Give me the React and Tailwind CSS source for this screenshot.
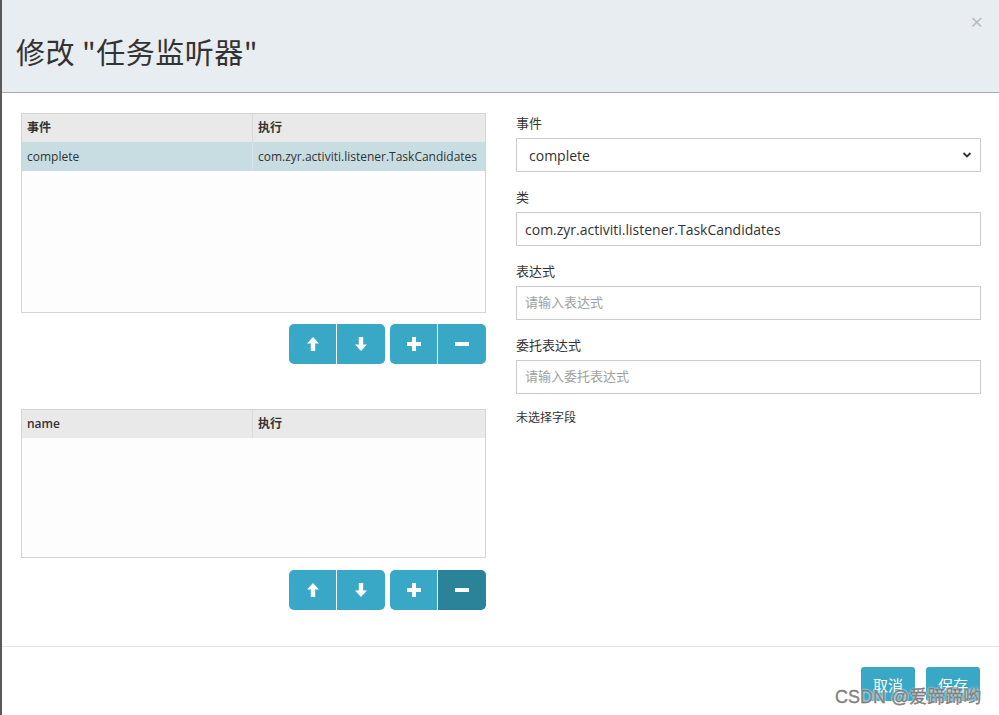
import React from 'react';

const font = { fontFamily: '"Open Sans", "Noto Sans CJK SC", sans-serif' };

function ArrowUp() {
  return (
    <svg width="12" height="14" viewBox="0 0 12 14" fill="white">
      <path d="M6 0 L12 6.5 L8.2 6.5 L8.2 14 L3.8 14 L3.8 6.5 L0 6.5 Z" />
    </svg>
  );
}
function ArrowDown() {
  return (
    <svg width="12" height="14" viewBox="0 0 12 14" fill="white">
      <path d="M6 14 L12 7.5 L8.2 7.5 L8.2 0 L3.8 0 L3.8 7.5 L0 7.5 Z" />
    </svg>
  );
}
function Plus() {
  return (
    <svg width="14" height="14" viewBox="0 0 14 14" fill="white">
      <path d="M5 0 H9 V5 H14 V9 H9 V14 H5 V9 H0 V5 H5 Z" />
    </svg>
  );
}
function Minus() {
  return (
    <svg width="14" height="14" viewBox="0 0 14 14" fill="white">
      <rect x="0" y="5" width="14" height="4" />
    </svg>
  );
}

function ButtonBar({ activeMinus }) {
  return (
    <div className="flex justify-end gap-[5px]">
      <div className="flex h-[40px] rounded-[5px] overflow-hidden">
        <button className="w-[48px] bg-[#38a8c6] flex items-center justify-center border-r border-white"><ArrowUp /></button>
        <button className="w-[48px] bg-[#38a8c6] flex items-center justify-center"><ArrowDown /></button>
      </div>
      <div className="flex h-[40px] rounded-[5px] overflow-hidden">
        <button className="w-[48px] bg-[#38a8c6] flex items-center justify-center border-r border-white"><Plus /></button>
        <button className={`w-[48px] flex items-center justify-center ${activeMinus ? 'bg-[#2a8399]' : 'bg-[#38a8c6]'}`}><Minus /></button>
      </div>
    </div>
  );
}

function Grid({ height, cols, rows }) {
  return (
    <div className={`border border-[#d4d4d4] bg-[#fdfdfd] ${height}`}>
      <div className="flex h-[28px] bg-[#e9e9e9] text-[12px] text-[#333] font-semibold">
        <div className="w-[231px] px-[5px] flex items-center border-r border-[#d8d8d8]">{cols[0]}</div>
        <div className="flex-1 px-[5px] flex items-center">{cols[1]}</div>
      </div>
      {rows.map((r, i) => (
        <div key={i} className="flex h-[29px] bg-[#c8dde2] text-[12px] text-[#333]">
          <div className="w-[231px] px-[5px] flex items-center border-r border-[#d8e4e7]">{r[0]}</div>
          <div className="flex-1 px-[5px] flex items-center whitespace-nowrap">{r[1]}</div>
        </div>
      ))}
    </div>
  );
}

function Field({ label, children }) {
  return (
    <div className="mb-[15px]">
      <div className="h-[20px] leading-[20px] text-[13px] text-[#333] mb-[5px]">{label}</div>
      {children}
    </div>
  );
}

export default function App() {
  return (
    <div className="relative w-[999px] h-[715px] bg-white border-l-2 border-[#5a5a5a] overflow-hidden flex flex-col" style={font}>
      <header className="h-[93px] bg-[#e8edf1] border-b border-[#a3abb8] flex items-center justify-between pl-[14px] pr-[16px] shrink-0">
        <h1 className="text-[29px] text-[#333] mt-[12px] tracking-[0.5px]" style={{ fontFamily: '"Noto Sans CJK SC", "Open Sans", sans-serif' }}>修改 "任务监听器"</h1>
        <div className="self-start mt-[10px] text-[#bbbbbb] text-[22px] leading-none">×</div>
      </header>

      <main className="flex gap-[30px] pl-[19px] pt-[20px] flex-1">
        <div className="w-[465px]">
          <Grid height="h-[200px]" cols={['事件', '执行']} rows={[['complete', 'com.zyr.activiti.listener.TaskCandidates']]} />
          <div className="mt-[11px]"><ButtonBar /></div>
          <div className="mt-[45px]">
            <Grid height="h-[149px]" cols={['name', '执行']} rows={[]} />
          </div>
          <div className="mt-[12px]"><ButtonBar activeMinus /></div>
        </div>

        <div className="w-[465px]">
          <Field label="事件">
            <div className="h-[34px] border border-[#cccccc] flex items-center justify-between pl-[12px] pr-[8px] text-[14px] text-[#333]">
              <span>complete</span>
              <svg width="10" height="8" viewBox="0 0 10 8"><path d="M1.5 2 L5 5.5 L8.5 2" stroke="#333" strokeWidth="1.8" fill="none" /></svg>
            </div>
          </Field>
          <Field label="类">
            <div className="h-[34px] border border-[#cccccc] flex items-center px-[8px] text-[14px] text-[#333]">com.zyr.activiti.listener.TaskCandidates</div>
          </Field>
          <Field label="表达式">
            <div className="h-[34px] border border-[#cccccc] flex items-center px-[8px] text-[13px] text-[#a0a0a0]">请输入表达式</div>
          </Field>
          <Field label="委托表达式">
            <div className="h-[34px] border border-[#cccccc] flex items-center px-[8px] text-[13px] text-[#a0a0a0]">请输入委托表达式</div>
          </Field>
          <div className="text-[12px] text-[#333] mt-[1px]">未选择字段</div>
        </div>
      </main>

      <footer className="h-[69px] border-t border-[#e5e5e5] flex justify-end items-start gap-[11px] pr-[19px] pt-[20px] shrink-0">
        <button className="w-[54px] h-[34px] rounded-[3px] bg-[#38a8c6] text-white text-[15px] pt-[3px]">取消</button>
        <button className="w-[54px] h-[34px] rounded-[3px] bg-[#38a8c6] text-white text-[15px] pt-[3px]">保存</button>
      </footer>

      <div
        className="absolute left-[833px] top-[684px] text-[18px] text-[#8a8a8a] whitespace-nowrap"
        style={{ fontFamily: '"Liberation Sans", "Noto Sans CJK SC", sans-serif', WebkitTextStroke: '0.3px #666', textShadow: '0 0 2px #fff, 0 0 2px #fff' }}
      >
        CSDN @爱蹄蹄哟
      </div>
    </div>
  );
}
